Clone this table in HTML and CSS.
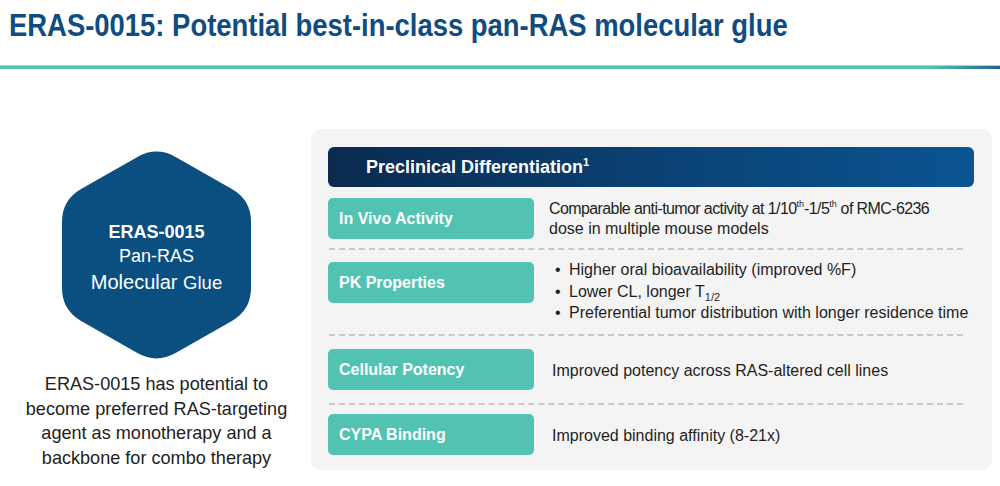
FILE: index.html
```html
<!DOCTYPE html>
<html lang="en">
<head>
<meta charset="utf-8">
<title>ERAS-0015</title>
<link rel="stylesheet" href="styles.css">
</head>
<body>
<div class="slide">
  <header class="top">
    <h1 class="title">ERAS-0015: Potential best-in-class pan-RAS molecular glue</h1>
    <div class="rule"></div>
  </header>
  <main class="main">
    <section class="left">
      <div class="hex">
        <svg class="hex-shape" width="190" height="224" viewBox="0 0 190 224" aria-hidden="true">
          <path d="M75.4,13.9 Q94.5,3 113.6,13.9 L169.9,46.1 Q189,57 189,79 L189,145 Q189,167 169.9,177.9 L113.6,210.1 Q94.5,221 75.4,210.1 L19.1,177.9 Q0,167 0,145 L0,79 Q0,57 19.1,46.1 Z" fill="#0b4f80"/>
        </svg>
        <div class="hex-text">
          <div class="hex-name">ERAS-0015</div>
          <div class="hex-sub">Pan-RAS</div>
          <div class="hex-big">Molecular <span class="hex-small">Glue</span></div>
        </div>
      </div>
      <p class="summary">ERAS-0015 has potential to<br>become preferred RAS-targeting<br>agent as monotherapy and a<br>backbone for combo therapy</p>
    </section>
    <section class="panel">
      <div class="panel-head">Preclinical Differentiation<sup class="fn">1</sup></div>
      <div class="row row-1">
        <div class="tag">In Vivo Activity</div>
        <div class="desc"><span class="tight">Comparable anti-tumor activity at 1/10<sup class="ord">th</sup>-1/5<sup class="ord">th</sup> of RMC-6236</span><br>dose in multiple mouse models</div>
      </div>
      <div class="sep"></div>
      <div class="row row-2">
        <div class="tag tag-pk">PK Properties</div>
        <ul class="bullets">
          <li>Higher oral bioavailability (improved %F)</li>
          <li>Lower CL, longer T<sub class="sub">1/2</sub></li>
          <li>Preferential tumor distribution with longer residence time</li>
        </ul>
      </div>
      <div class="sep sep-2"></div>
      <div class="row row-3">
        <div class="tag">Cellular Potency</div>
        <div class="desc desc-low">Improved potency across RAS-altered cell lines</div>
      </div>
      <div class="sep sep-3"></div>
      <div class="row row-4">
        <div class="tag">CYPA Binding</div>
        <div class="desc desc-low">Improved binding affinity (8-21x)</div>
      </div>
    </section>
  </main>
</div>
</body>
</html>
```

FILE: styles.css
```css
* { box-sizing: border-box; }
html, body { margin: 0; padding: 0; background: #ffffff; }
body {
  font-family: "Liberation Sans", Arial, sans-serif;
  color: #1f1f1f;
}
.slide {
  width: 1000px;
  height: 486px;
  overflow: hidden;
}
.top { padding-top: 7px; }
.title {
  display: inline-block;
  margin: 0 0 0 9px;
  font-size: 32px;
  line-height: 36px;
  font-weight: 700;
  color: #0f4c80;
  white-space: nowrap;
  transform: scaleX(0.857);
  transform-origin: 0 50%;
}
.rule {
  margin-top: 22px;
  height: 4px;
  background: linear-gradient(to right, #52c2b2 0%, #52c2b2 93%, #1d6590 100%);
  border-top: 1px solid #9fdcd2;
}
.main {
  display: flex;
  margin-top: 60px;
}
.left {
  width: 311px;
  flex: none;
  display: flex;
  flex-direction: column;
  align-items: center;
  padding-top: 14px;
  padding-left: 2px;
}
.hex {
  display: grid;
  width: 190px;
  height: 224px;
}
.hex-shape, .hex-text { grid-area: 1 / 1; }
.hex-text {
  display: flex;
  flex-direction: column;
  align-items: center;
  justify-content: center;
  color: #ffffff;
  text-align: center;
  padding-top: 6px;
}
.hex-name { font-size: 18px; font-weight: 700; line-height: 24px; }
.hex-sub { font-size: 18px; line-height: 24px; }
.hex-big { font-size: 20px; line-height: 28px; }
.hex-small { font-size: 18.5px; }
.summary {
  margin: 5px 0 0;
  font-size: 18.1px;
  line-height: 24.6px;
  text-align: center;
  color: #222222;
}
.panel {
  width: 681px;
  height: 341px;
  background: #f4f4f4;
  border-radius: 10px;
  padding: 18px 18px 16px 17px;
  display: flex;
  flex-direction: column;
}
.panel-head {
  height: 40px;
  border-radius: 6px;
  background: linear-gradient(to right, #0b2a4e 0%, #0a3f70 45%, #0a5592 100%);
  color: #ffffff;
  font-weight: 700;
  font-size: 18px;
  line-height: 40px;
  padding-left: 38px;
}
.fn { font-size: 11px; vertical-align: 7px; line-height: 0; }
.row {
  display: flex;
  align-items: center;
}
.row-1 { margin-top: 11px; }
.row-2 { align-items: flex-start; }
.tag {
  flex: none;
  width: 206px;
  height: 41px;
  border-radius: 5px;
  background: #52c3b2;
  color: #ffffff;
  font-weight: 700;
  font-size: 16px;
  line-height: 41px;
  padding-left: 11px;
}
.tag-pk { margin-top: 3px; }
.desc {
  margin-left: 15px;
  font-size: 16px;
  line-height: 19.5px;
  color: #1f1f1f;
}
.tight { letter-spacing: -0.6px; }
.desc-low { margin-left: 18px; padding-top: 4px; }
.ord { font-size: 9px; vertical-align: 7px; line-height: 0; letter-spacing: 0; }
.sub { font-size: 11px; vertical-align: -4px; line-height: 0; }
.bullets {
  list-style: none;
  margin: 0 0 0 21px;
  padding: 0;
  font-size: 16px;
  line-height: 21.5px;
  color: #1f1f1f;
}
.bullets li { position: relative; padding-left: 14px; }
.bullets li::before {
  content: "•";
  position: absolute;
  left: 0;
  top: 0;
}
.sep {
  width: 634px;
  margin: 9px 0 9px 1px;
  border-top: 2px dashed #c9c9c9;
}
.sep-2 { margin: 10px 0 13px 1px; }
.sep-3 { margin: 13px 0 9px 1px; }
```
